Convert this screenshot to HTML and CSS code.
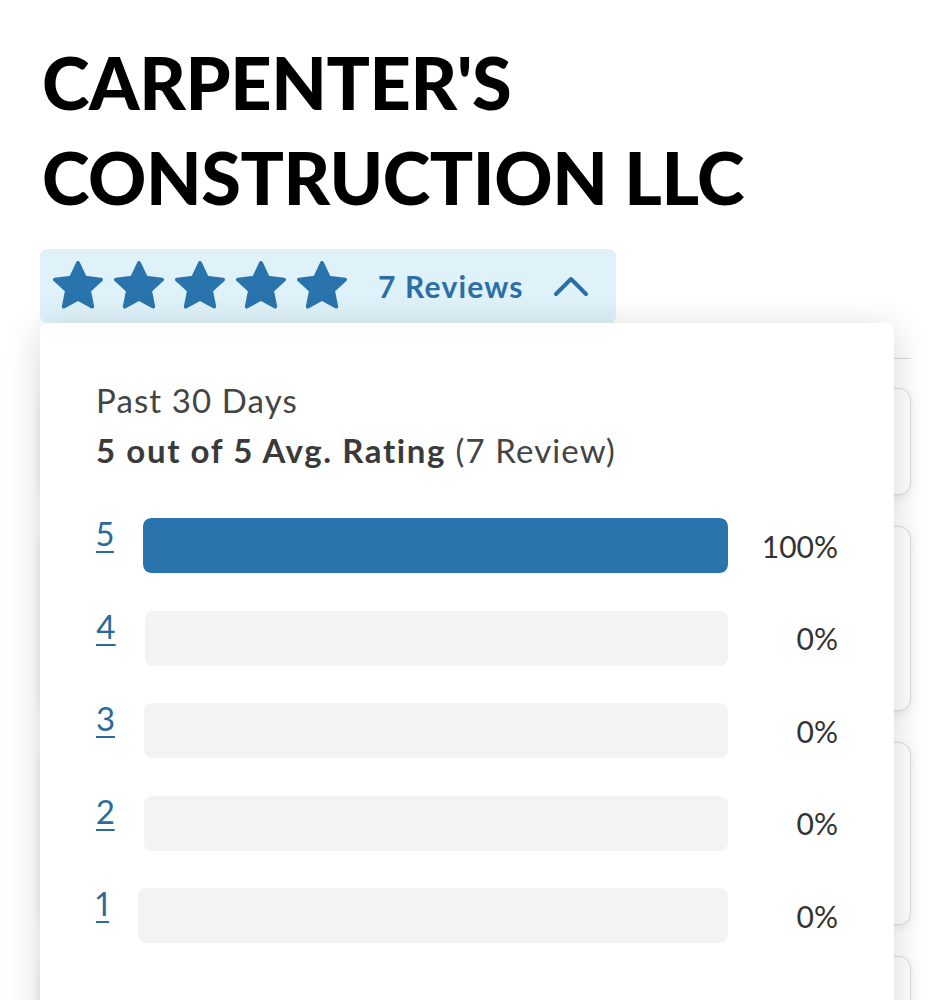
FILE: index.html
```html
<!DOCTYPE html>
<html>
<head>
<meta charset="utf-8">
<link rel="stylesheet" href="styles.css">
</head>
<body>
<div class="page">
  <h1 class="title">CARPENTER'S CONSTRUCTION LLC</h1>
  <div class="rating">
    <button class="rating-bar">
      <span class="stars">
        <svg class="star" viewBox="1.8 1.8 20.4 20.4"><path d="M12 2.6l2.8 6 6.6.8-4.9 4.5 1.3 6.5L12 17.2l-5.8 3.2 1.3-6.5-4.9-4.5 6.6-.8z"/></svg>
        <svg class="star" viewBox="1.8 1.8 20.4 20.4"><path d="M12 2.6l2.8 6 6.6.8-4.9 4.5 1.3 6.5L12 17.2l-5.8 3.2 1.3-6.5-4.9-4.5 6.6-.8z"/></svg>
        <svg class="star" viewBox="1.8 1.8 20.4 20.4"><path d="M12 2.6l2.8 6 6.6.8-4.9 4.5 1.3 6.5L12 17.2l-5.8 3.2 1.3-6.5-4.9-4.5 6.6-.8z"/></svg>
        <svg class="star" viewBox="1.8 1.8 20.4 20.4"><path d="M12 2.6l2.8 6 6.6.8-4.9 4.5 1.3 6.5L12 17.2l-5.8 3.2 1.3-6.5-4.9-4.5 6.6-.8z"/></svg>
        <svg class="star" viewBox="1.8 1.8 20.4 20.4"><path d="M12 2.6l2.8 6 6.6.8-4.9 4.5 1.3 6.5L12 17.2l-5.8 3.2 1.3-6.5-4.9-4.5 6.6-.8z"/></svg>
      </span>
      <span class="count">7 Reviews</span>
      <svg class="chevron" viewBox="0 0 36 22"><path d="M3 19L18 4l15 15"/></svg>
    </button>
    <div class="popup">
      <p class="period">Past 30 Days</p>
      <p class="avg"><strong>5 out of 5 Avg. Rating</strong> (7 Review)</p>
      <ul class="dist">
        <li class="dist-row"><a class="dist-num" href="#">5</a><span class="track"><span class="fill" style="width:100%"></span></span><span class="pct">100%</span></li>
        <li class="dist-row"><a class="dist-num" href="#">4</a><span class="track"><span class="fill" style="width:0%"></span></span><span class="pct">0%</span></li>
        <li class="dist-row"><a class="dist-num" href="#">3</a><span class="track"><span class="fill" style="width:0%"></span></span><span class="pct">0%</span></li>
        <li class="dist-row"><a class="dist-num" href="#">2</a><span class="track"><span class="fill" style="width:0%"></span></span><span class="pct">0%</span></li>
        <li class="dist-row"><a class="dist-num" href="#">1</a><span class="track"><span class="fill" style="width:0%"></span></span><span class="pct">0%</span></li>
      </ul>
    </div>
  </div>
  <hr class="sep">
  <div class="cards">
    <div class="card c1"></div>
    <div class="card c2"></div>
    <div class="card c3"></div>
    <div class="card c4"></div>
  </div>
</div>
</body>
</html>
```

FILE: styles.css
```css
* { box-sizing: border-box; }
html, body { margin: 0; padding: 0; background: #fff; }
body { font-family: Lato, "Noto Sans", sans-serif; color: #333; overflow: hidden; height: 1000px; }
.page { padding: 0 20px 0 40px; }
.title {
  margin: 35px 0 24px 2px;
  font-size: 72px;
  line-height: 95px;
  font-weight: 900;
  letter-spacing: -0.4px;
  color: #000;
  width: 760px;
}
.rating { position: relative; display: inline-block; vertical-align: top; }
.rating-bar {
  display: flex;
  align-items: center;
  height: 74px;
  padding: 0 27px 0 13px;
  background: #dff2f9;
  border: none;
  border-radius: 8px;
  box-shadow: 0 1px 2px rgba(0,0,0,0.06);
  font: inherit;
  cursor: pointer;
}
.stars { display: flex; gap: 11px; }
.star { width: 50px; height: 50px; display: block; }
.star path { fill: #2a74ad; stroke: #2a74ad; stroke-width: 1.6; stroke-linejoin: round; }
.count { margin-left: 31px; font-size: 30px; font-weight: 700; letter-spacing: 1.2px; color: #2b6fa6; }
.chevron { margin-left: 29px; width: 36px; height: 22px; display: block; }
.chevron path { fill: none; stroke: #2b6fa6; stroke-width: 4; stroke-linecap: round; stroke-linejoin: round; }
.popup {
  position: absolute;
  left: 0;
  top: 74px;
  width: 854px;
  height: 760px;
  background: #fff;
  border-radius: 8px;
  box-shadow: 0 6px 36px rgba(0,0,0,0.16);
  padding: 52px 56px 0 56px;
  z-index: 2;
}
.period, .avg { margin: 0; font-size: 33px; line-height: 50px; letter-spacing: 1.1px; color: #444; }
.avg strong { font-weight: 700; letter-spacing: 1.6px; color: #3a3a3a; }
.dist { list-style: none; margin: 43px 0 0; padding: 0; display: flex; flex-direction: column; gap: 37.5px; }
.dist-row { display: flex; align-items: flex-start; }
.dist-num { font-size: 33px; line-height: 30px; font-variant-numeric: proportional-nums; color: #2b6a9b; text-decoration: underline; text-decoration-thickness: 2px; text-underline-offset: 5px; margin-right: 29px; }
.track { flex: 1; height: 55px; background: #f3f3f3; border-radius: 8px; overflow: hidden; display: block; }
.fill { display: block; height: 100%; background: #2a74ad; border-radius: 8px; }
.pct { align-self: center; width: 110px; text-align: right; font-size: 30px; color: #333; }
.sep { margin: 35px 0 0; border: none; border-top: 1px solid #d8d8d8; }
.cards { display: flex; flex-direction: column; gap: 31px; margin-top: 29px; }
.card { border: 1px solid #dcdcdc; border-radius: 12px; box-shadow: 0 3px 8px rgba(0,0,0,0.08); background: #fff; }
.c1 { height: 107px; }
.c2 { height: 185px; }
.c3 { height: 183px; }
.c4 { height: 150px; }
```
